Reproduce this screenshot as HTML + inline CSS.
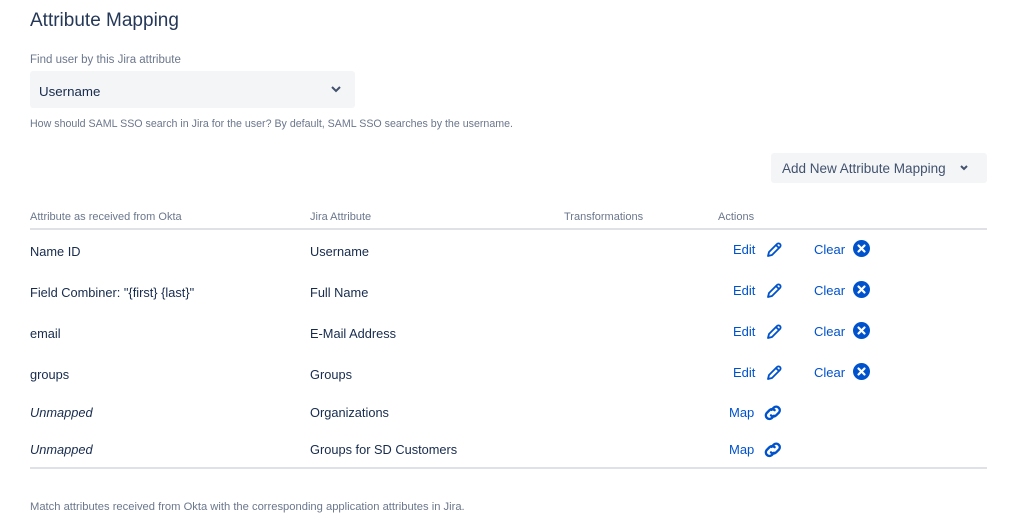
<!DOCTYPE html>
<html><head><meta charset="utf-8"><style>
body{margin:0;width:1024px;height:530px;background:#fff;font-family:"Liberation Sans",sans-serif;position:relative;overflow:hidden;color:#172b4d}
.a{position:absolute;white-space:nowrap}
.lbl{font-size:12px;color:#6b778c}
.row{font-size:12.8px;color:#172b4d}
.lnk{font-size:13px;color:#0052cc}
.hr{position:absolute;left:30px;width:957px;height:2px;background:#dfe1e6}
</style></head><body>
<div class="a" style="left:30px;top:10px;font-size:19px;color:#253858">Attribute Mapping</div>
<div class="a lbl" style="left:30px;top:54px;font-size:11.5px">Find user by this Jira attribute</div>
<div class="a" style="left:30px;top:71px;width:325px;height:37px;background:#f4f5f7;border-radius:3px"></div>
<div class="a row" style="left:39px;top:84px;font-size:13.3px">Username</div>
<svg class="a" style="left:330px;top:84px" width="12" height="10" viewBox="0 0 12 10"><path d="M2 3l4 4 4-4" stroke="#42526e" stroke-width="2" fill="none"/></svg>
<div class="a lbl" style="left:30px;top:118px;font-size:10.65px">How should SAML SSO search in Jira for the user? By default, SAML SSO searches by the username.</div>
<div class="a" style="left:771px;top:153px;width:216px;height:30px;background:#f4f5f7;border-radius:3px"></div>
<div class="a" style="left:782px;top:161px;font-size:13.5px;color:#42526e">Add New Attribute Mapping</div>
<svg class="a" style="left:959px;top:164px" width="10" height="8" viewBox="0 0 10 8"><path d="M2 2l3 3 3-3" stroke="#42526e" stroke-width="2" fill="none"/></svg>
<div class="a lbl" style="left:30px;top:211px;font-size:11px">Attribute as received from Okta</div>
<div class="a lbl" style="left:310px;top:211px;font-size:11px">Jira Attribute</div>
<div class="a lbl" style="left:564px;top:211px;font-size:11px">Transformations</div>
<div class="a lbl" style="left:718px;top:211px;font-size:11px">Actions</div>
<div class="hr" style="top:228px"></div>

<div class="a row" style="left:30px;top:244px">Name ID</div><div class="a row" style="left:310px;top:244px">Username</div>
<div class="a row" style="left:30px;top:285px">Field Combiner: "{first} {last}"</div><div class="a row" style="left:310px;top:285px">Full Name</div>
<div class="a row" style="left:30px;top:326px">email</div><div class="a row" style="left:310px;top:326px">E-Mail Address</div>
<div class="a row" style="left:30px;top:367px">groups</div><div class="a row" style="left:310px;top:367px">Groups</div>
<div class="a row" style="left:30px;top:405px;font-style:italic">Unmapped</div><div class="a row" style="left:310px;top:405px">Organizations</div>
<div class="a row" style="left:30px;top:442px;font-style:italic">Unmapped</div><div class="a row" style="left:310px;top:442px">Groups for SD Customers</div>

<div class="a lnk" style="left:733px;top:242px">Edit</div><div class="a lnk" style="left:814px;top:242px">Clear</div>
<div class="a lnk" style="left:733px;top:283px">Edit</div><div class="a lnk" style="left:814px;top:283px">Clear</div>
<div class="a lnk" style="left:733px;top:324px">Edit</div><div class="a lnk" style="left:814px;top:324px">Clear</div>
<div class="a lnk" style="left:733px;top:365px">Edit</div><div class="a lnk" style="left:814px;top:365px">Clear</div>
<div class="a lnk" style="left:729px;top:405px">Map</div>
<div class="a lnk" style="left:729px;top:442px">Map</div>

<svg class="a" style="left:0;top:0" width="1024" height="530">
<defs>
<g id="pen"><path d="M3 15l1-4 8-8a1.5 1.5 0 0 1 3 3l-8 8z M11 4l3 3" stroke="#0052cc" stroke-width="1.8" fill="none" stroke-linejoin="round"/></g>
<g id="x"><circle cx="8.5" cy="8.5" r="8.5" fill="#0052cc"/><path d="M5.5 5.5l6 6M11.5 5.5l-6 6" stroke="#fff" stroke-width="2.2" stroke-linecap="round"/></g>
<g id="lk"><path d="M8 6.5l2-2a3 3 0 0 1 4.2 4.2l-2.5 2.5a3 3 0 0 1-4.2 0 M10 11.5l-2 2a3 3 0 0 1-4.2-4.2l2.5-2.5a3 3 0 0 1 4.2 0" stroke="#0052cc" stroke-width="2" fill="none" stroke-linecap="round"/></g>
</defs>
<use href="#pen" x="765" y="241"/><use href="#x" x="853" y="240"/>
<use href="#pen" x="765" y="282"/><use href="#x" x="853" y="281"/>
<use href="#pen" x="765" y="323"/><use href="#x" x="853" y="322"/>
<use href="#pen" x="765" y="364"/><use href="#x" x="853" y="363"/>
<g transform="translate(762,402) scale(1.2)"><use href="#lk"/></g>
<g transform="translate(762,439) scale(1.2)"><use href="#lk"/></g>
</svg>

<div class="hr" style="top:467px"></div>
<div class="a lbl" style="left:30px;top:501px;font-size:11.2px">Match attributes received from Okta with the corresponding application attributes in Jira.</div>
</body></html>
